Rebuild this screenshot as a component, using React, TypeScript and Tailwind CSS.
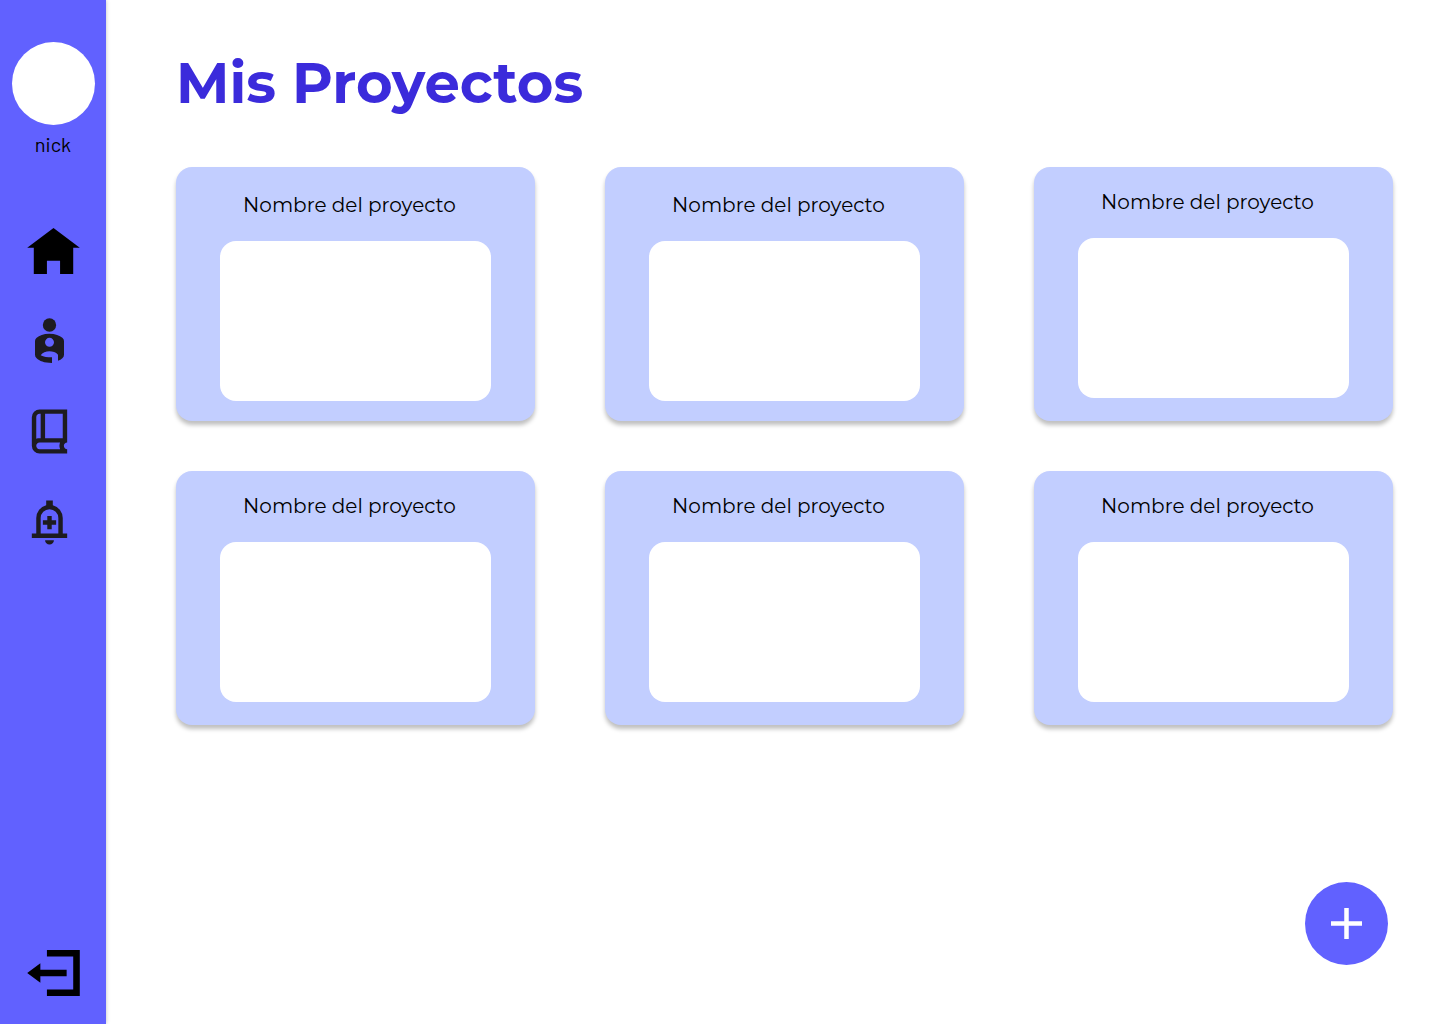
import React from "react";

type Project = { id: number; name: string; roomy: boolean };

const projects: Project[] = [
  { id: 1, name: "Nombre del proyecto", roomy: true },
  { id: 2, name: "Nombre del proyecto", roomy: true },
  { id: 3, name: "Nombre del proyecto", roomy: false },
  { id: 4, name: "Nombre del proyecto", roomy: false },
  { id: 5, name: "Nombre del proyecto", roomy: false },
  { id: 6, name: "Nombre del proyecto", roomy: false },
];

function HomeIcon() {
  return (
    <svg viewBox="0 0 8 7" className="h-[46px] w-[53px]" fill="#000" aria-hidden="true">
      <path d="M4 0l-4 3h1v4h2v-2h2v2h2v-4h1l-4-3z" />
    </svg>
  );
}

function PersonIcon() {
  return (
    <svg viewBox="9 27 159 159" className="size-[53px]" fill="#1d1b20" aria-hidden="true">
      <circle cx="88.5" cy="60" r="20" />
      <path
        fillRule="evenodd"
        d="M88 86C106 86 119 91 127 98Q132 102 132 108V149Q132 155 127 160Q122 165 114 167V149C108 142 98 139 88 139C78 139 67 143 62 151C71 156 82 157 96 157V174C72 174 58 168 50 160Q45 155 45 149V108Q45 102 50 98C58 91 70 86 88 86ZM88.500 98.500a13.500 13.500 0 1 0 0 27a13.500 13.500 0 1 0 0-27Z"
      />
    </svg>
  );
}

function BookIcon() {
  return (
    <svg viewBox="0 0 24 24" className="size-[53px]" fill="#1d1b20" aria-hidden="true">
      <path
        fillRule="evenodd"
        d="M7.5 22q-1.450 0-2.475-1.025T4 18.500v-13q0-1.450 1.025-2.475T7.500 2H20v15q-.625 0-1.062.438T18.500 18.500t.438 1.063T20 20v2zM6 15.325q.350-.175.725-.250T7.500 15H8V4h-.5q-.625 0-1.062.438T6 5.500zM10 15h8V4h-8zM7.500 20h9.325q-.150-.350-.237-.712T16.500 18.500q0-.400.075-.775t.250-.725H7.500q-.650 0-1.075.438T6 18.500q0 .650.425 1.075T7.500 20z"
      />
    </svg>
  );
}

function AlertIcon() {
  return (
    <svg viewBox="0 0 24 24" className="size-[53px]" fill="#1d1b20" aria-hidden="true">
      <path
        fillRule="evenodd"
        d="M4 19v-2h2v-7q0-2.075 1.250-3.687T10.500 4.200V2h3v2.200q2 .500 3.250 2.113T18 10v7h2v2zM8 17h8v-7q0-1.650-1.175-2.825T12 6 9.175 7.175 8 10zM12 22q-.825 0-1.412-.587T10 20h4q0 .825-.587 1.413T12 22zM11 15v-2H9v-2h2V9h2v2h2v2h-2v2z"
      />
    </svg>
  );
}

function LogoutIcon() {
  return (
    <svg viewBox="0 0 8 7" className="h-[46px] w-[53px]" fill="#000" aria-hidden="true">
      <path d="M3 0v1h4v5h-4v1h5v-7h-5zm-1 2l-2 1.500 2 1.500v-1h4v-1h-4v-1z" />
    </svg>
  );
}

function Sidebar() {
  return (
    <aside className="flex w-[106px] shrink-0 flex-col bg-[#6161ff] pt-[42px] pb-7 shadow-[0_0_4px_rgba(0,0,0,0.25)]">
      <div className="flex flex-col items-center">
        <div className="size-[83px] rounded-full bg-white" />
        <p className="mt-[7px] font-['Barlow','Roboto',sans-serif] text-xl leading-6 text-black">nick</p>
      </div>
      <nav className="mt-[72px] flex flex-col items-start gap-[38px] pl-[23px]">
        <a href="#inicio" aria-label="Inicio" className="block h-12 pl-1">
          <HomeIcon />
        </a>
        <a href="#perfil" aria-label="Perfil" className="block">
          <PersonIcon />
        </a>
        <a href="#biblioteca" aria-label="Biblioteca" className="block">
          <BookIcon />
        </a>
        <a href="#alertas" aria-label="Alertas" className="block">
          <AlertIcon />
        </a>
      </nav>
      <button type="button" aria-label="Salir" className="mt-auto ml-[27px] self-start">
        <LogoutIcon />
      </button>
    </aside>
  );
}

function ProjectCard({ project }: { project: Project }) {
  return (
    <article
      className={
        project.roomy
          ? "rounded-2xl bg-[#c2ceff] px-11 pt-6 pb-5 shadow-[0_4px_4px_rgba(0,0,0,0.25)]"
          : "rounded-2xl bg-[#c2ceff] px-11 pt-[21px] pb-[23px] shadow-[0_4px_4px_rgba(0,0,0,0.25)]"
      }
    >
      <h2 className="pr-3 text-center text-xl leading-7 whitespace-nowrap text-black">{project.name}</h2>
      <div className="mt-[22px] h-40 rounded-2xl bg-white" />
    </article>
  );
}

export default function App() {
  return (
    <div className="flex min-h-screen bg-white font-['Montserrat','Inter',sans-serif]">
      <Sidebar />
      <main className="min-w-0 flex-1 pt-12 pr-[47px] pb-12 pl-[70px]">
        <h1 className="text-[56px] leading-[70px] font-bold text-[#3b2bdb]">Mis Proyectos</h1>
        <section className="mt-[49px] grid grid-cols-3 gap-x-[70px] gap-y-[50px]">
          {projects.map((project) => (
            <ProjectCard key={project.id} project={project} />
          ))}
        </section>
      </main>
      <button
        type="button"
        aria-label="Nuevo proyecto"
        className="fixed right-[52px] bottom-[59px] flex size-[83px] items-center justify-center rounded-full bg-[#6161ff]"
      >
        <svg viewBox="0 0 31 31" className="size-[31px]" stroke="#fff" strokeWidth="4.5" aria-hidden="true">
          <path d="M15.500 0v31M0 15.500h31" />
        </svg>
      </button>
    </div>
  );
}
